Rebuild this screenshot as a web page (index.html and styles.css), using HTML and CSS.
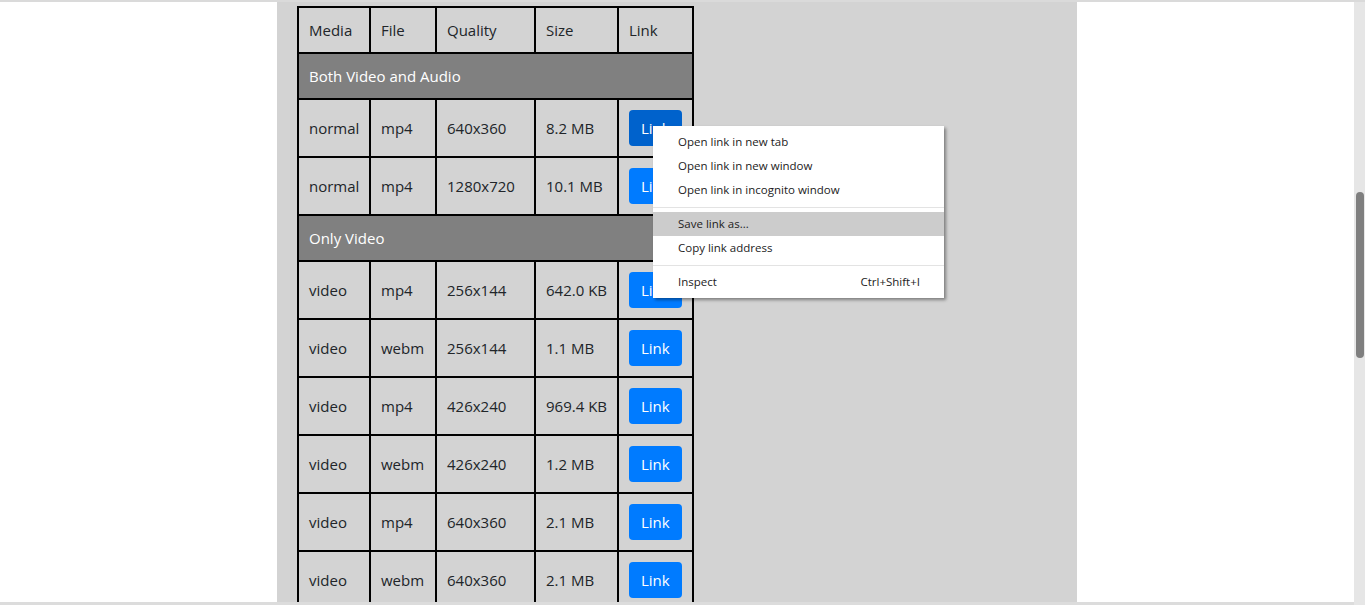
FILE: index.html
```html
<!DOCTYPE html>
<html lang="en">
<head>
<meta charset="utf-8">
<title>Download links</title>
<link rel="stylesheet" href="styles.css">
</head>
<body>
<div class="topline"></div>
<div class="frame">
  <div class="main">
    <div class="page">
      <div class="container">
        <table class="links">
          <colgroup>
            <col class="c1"><col class="c2"><col class="c3"><col class="c4"><col class="c5">
          </colgroup>
          <thead>
            <tr><th>Media</th><th>File</th><th>Quality</th><th>Size</th><th>Link</th></tr>
          </thead>
          <tbody>
            <tr class="group"><td colspan="5">Both Video and Audio</td></tr>
            <tr><td>normal</td><td>mp4</td><td>640x360</td><td>8.2 MB</td><td><a class="btn active" href="#">Link</a></td></tr>
            <tr><td>normal</td><td>mp4</td><td>1280x720</td><td>10.1 MB</td><td><a class="btn" href="#">Link</a></td></tr>
            <tr class="group"><td colspan="5">Only Video</td></tr>
            <tr><td>video</td><td>mp4</td><td>256x144</td><td>642.0 KB</td><td><a class="btn" href="#">Link</a></td></tr>
            <tr><td>video</td><td>webm</td><td>256x144</td><td>1.1 MB</td><td><a class="btn" href="#">Link</a></td></tr>
            <tr><td>video</td><td>mp4</td><td>426x240</td><td>969.4 KB</td><td><a class="btn" href="#">Link</a></td></tr>
            <tr><td>video</td><td>webm</td><td>426x240</td><td>1.2 MB</td><td><a class="btn" href="#">Link</a></td></tr>
            <tr><td>video</td><td>mp4</td><td>640x360</td><td>2.1 MB</td><td><a class="btn" href="#">Link</a></td></tr>
            <tr><td>video</td><td>webm</td><td>640x360</td><td>2.1 MB</td><td><a class="btn" href="#">Link</a></td></tr>
          </tbody>
        </table>
      </div>
    </div>
    <div class="hbar"></div>
  </div>
  <div class="vscroll"><div class="thumb"></div></div>
</div>

<div class="ctxmenu">
  <div class="item">Open link in new tab</div>
  <div class="item">Open link in new window</div>
  <div class="item">Open link in incognito window</div>
  <div class="sep"></div>
  <div class="item hover">Save link as...</div>
  <div class="item">Copy link address</div>
  <div class="sep"></div>
  <div class="item"><span>Inspect</span><span class="key">Ctrl+Shift+I</span></div>
</div>
</body>
</html>
```
FILE: styles.css
```css
html, body {
  margin: 0;
  padding: 0;
  height: 605px;
  overflow: hidden;
  background: #ffffff;
}
body {
  font-family: "Open Sans", "Noto Sans", sans-serif;
  color: #212529;
  display: flex;
  flex-direction: column;
}
.topline {
  height: 2px;
  background: #dadada;
  flex: none;
}
.frame {
  flex: 1;
  display: flex;
  min-height: 0;
}
.main {
  flex: 1;
  display: flex;
  flex-direction: column;
  min-width: 0;
}
.page {
  flex: 1;
  overflow: hidden;
  display: flex;
  justify-content: center;
}
.container {
  width: 800px;
  background: #d3d3d3;
  padding: 4px 20px 0;
  box-sizing: border-box;
}
.links {
  border-collapse: collapse;
  table-layout: fixed;
  width: 397px;
  font-size: 15px;
  line-height: 24px;
}
.c1 { width: 72px; }
.c2 { width: 66px; }
.c3 { width: 99px; }
.c4 { width: 83px; }
.c5 { width: 75px; }
.links th, .links td {
  border: 2px solid #000;
  padding: 10px;
  text-align: left;
  font-weight: normal;
  white-space: nowrap;
}
.links tr.group td {
  background: #808080;
  color: #ffffff;
}
.btn {
  display: inline-block;
  background: #007bff;
  color: #fff;
  text-decoration: none;
  padding: 6px 12px;
  border-radius: 4px;
  line-height: 24px;
  font-size: 15px;
}
.btn.active {
  background: #0062cc;
}
.hbar {
  height: 3px;
  background: #dcdcdc;
  flex: none;
}
.vscroll {
  width: 11px;
  background: #e6e6e6;
  flex: none;
  padding-top: 190px;
  box-sizing: border-box;
}
.thumb {
  width: 8px;
  margin-left: 2px;
  height: 166px;
  background: #7f7f7f;
  border-radius: 4px;
}
.ctxmenu {
  position: absolute;
  left: 653px;
  top: 126px;
  width: 291px;
  background: #ffffff;
  box-shadow: 2px 2px 3px rgba(0,0,0,0.4);
  padding: 4px 0;
  font-family: "Open Sans", "Noto Sans", sans-serif;
  font-size: 11.5px;
  color: #222;
  box-sizing: border-box;
}
.ctxmenu .item {
  height: 24px;
  line-height: 24px;
  padding: 0 24px 0 25px;
  display: flex;
  justify-content: space-between;
}
.ctxmenu .item.hover {
  background: #cccccc;
}
.ctxmenu .sep {
  height: 1px;
  background: #e3e3e3;
  margin: 5px 0 4px;
}
```
